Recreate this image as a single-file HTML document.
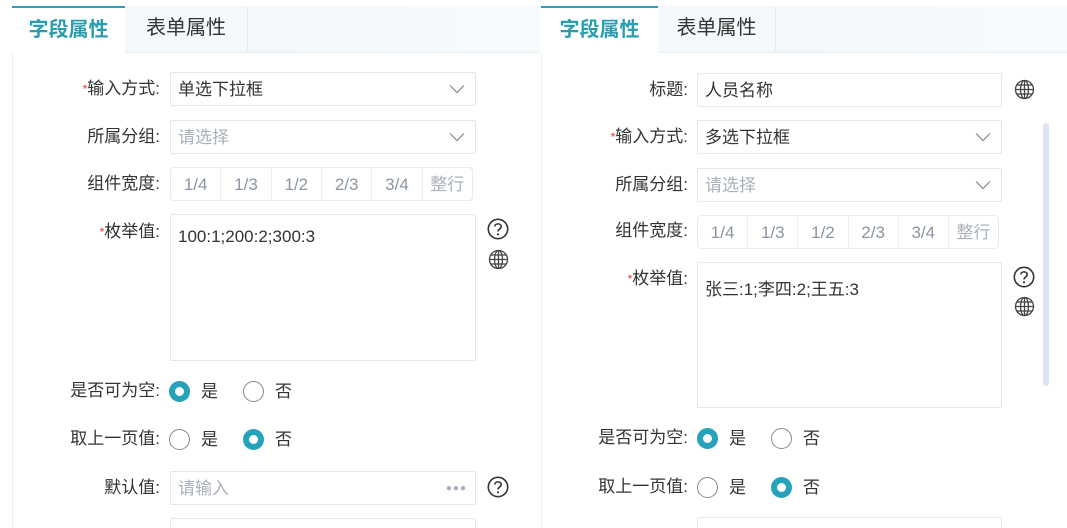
<!DOCTYPE html>
<html style="overflow:hidden;height:528px"><head><meta charset="utf-8"><style>
*{box-sizing:border-box;margin:0;padding:0}
body{width:1067px;height:528px;overflow:hidden;background:#fff;font-family:"Liberation Sans","Noto Sans CJK SC",sans-serif;color:#333;position:relative}
.a{position:absolute}
.tabbar{position:absolute;top:6px;height:47px;background:linear-gradient(90deg,#f1f7fa,#f6fafc);border-bottom:1px solid #e8eef2}
.tab1{position:absolute;top:0;height:47px;background:#fff;border-top:2px solid #2aa0b4;color:#2a9cb0;font-weight:bold;font-size:20px;line-height:45px;text-align:center}
.tab2{position:absolute;top:0;height:46px;background:#f4f9fb;border-right:1px solid #e6eef2;font-size:20px;line-height:44px;text-align:center;color:#333}
.lbl{position:absolute;font-size:17px;text-align:right;width:150px;line-height:22px}
.lbl b{color:#e33;font-weight:normal;font-size:12px;vertical-align:top}
.inp{position:absolute;height:34px;border:1px solid #e4e6e8;border-radius:2px;font-size:17px;line-height:34px;padding-left:7px}
.ph{color:#a8b0bc}
.chev{position:absolute;right:10px;top:11px}
.seg{position:absolute;height:34px;border:1px solid #e8eaec;border-radius:4px;display:flex;font-size:17px;color:#8a96a4;line-height:33px}
.seg span{flex:1;text-align:center;border-right:1px solid #eceef0}
.seg span:last-child{border-right:none;color:#a8b2bc}
.ta{position:absolute;border:1px solid #e4e6e8;border-radius:2px;font-size:17px;padding:12px 7px}
.r{position:absolute;width:21px;height:21px;border-radius:50%;border:1px solid #888}
.r.on{border:6px solid #26a2ba;background:#fff}
.rt{position:absolute;font-size:17px;line-height:22px}
</style></head><body>
<svg width="0" height="0" style="position:absolute"><defs>
<symbol id="cv" viewBox="0 0 16 10"><path d="M1 1.5 L8 8.5 L15 1.5" fill="none" stroke="#888" stroke-width="1.2"/></symbol>
<symbol id="gl" viewBox="0 0 21 21"><g fill="none" stroke="#444" stroke-width="1.3"><circle cx="10.5" cy="10.5" r="9"/><ellipse cx="10.5" cy="10.5" rx="4" ry="9"/><line x1="10.5" y1="1.5" x2="10.5" y2="19.5"/><line x1="1.5" y1="10.5" x2="19.5" y2="10.5"/><line x1="3" y1="6" x2="18" y2="6"/><line x1="3" y1="15" x2="18" y2="15"/></g></symbol>
<symbol id="qm" viewBox="0 0 22 22"><circle cx="11" cy="11" r="9.7" fill="none" stroke="#333" stroke-width="1.6"/><path d="M7.8 8.5 C7.8 5 14.2 5 14.2 8.5 C14.2 11 11 11 11 13.5" fill="none" stroke="#333" stroke-width="1.6"/><circle cx="11" cy="16.3" r="1.1" fill="#333"/></symbol>
</defs></svg>

<!-- LEFT PANEL -->
<div class="tabbar" style="left:12px;width:528px"></div>
<div class="tab1 a" style="left:12px;top:6px;width:113px">字段属性</div>
<div class="tab2" style="left:125px;top:6px;width:123px">表单属性</div>
<div class="a" style="left:12px;top:53px;width:1px;height:475px;background:#eceef0"></div>

<div class="lbl" style="left:10px;top:78px"><b>*</b>输入方式:</div>
<div class="inp" style="left:170px;top:72px;width:306px">单选下拉框<svg class="chev" width="16" height="10"><use href="#cv"/></svg></div>
<div class="lbl" style="left:10px;top:126px">所属分组:</div>
<div class="inp ph" style="left:170px;top:120px;width:306px">请选择<svg class="chev" width="16" height="10"><use href="#cv"/></svg></div>
<div class="lbl" style="left:10px;top:173px">组件宽度:</div>
<div class="seg" style="left:170px;top:167px;width:303px"><span>1/4</span><span>1/3</span><span>1/2</span><span>2/3</span><span>3/4</span><span>整行</span></div>
<div class="lbl" style="left:10px;top:221px"><b>*</b>枚举值:</div>
<div class="ta" style="left:170px;top:214px;width:306px;height:147px">100:1;200:2;300:3</div>
<svg class="a" style="left:487px;top:218px" width="22" height="22"><use href="#qm"/></svg>
<svg class="a" style="left:488px;top:249px" width="21" height="21"><use href="#gl"/></svg>

<div class="lbl" style="left:10px;top:380px">是否可为空:</div>
<div class="r on" style="left:169px;top:381px"></div><div class="rt" style="left:201px;top:381px">是</div>
<div class="r" style="left:243px;top:381px"></div><div class="rt" style="left:275px;top:381px">否</div>
<div class="lbl" style="left:10px;top:428px">取上一页值:</div>
<div class="r" style="left:169px;top:429px"></div><div class="rt" style="left:201px;top:429px">是</div>
<div class="r on" style="left:243px;top:429px"></div><div class="rt" style="left:275px;top:429px">否</div>
<div class="lbl" style="left:10px;top:477px">默认值:</div>
<div class="inp ph" style="left:170px;top:471px;width:306px">请输入<span style="position:absolute;right:8px;top:0;color:#aab;font-size:10px;letter-spacing:1px">●●●</span></div>
<svg class="a" style="left:487px;top:476px" width="22" height="22"><use href="#qm"/></svg>
<div class="inp" style="left:170px;top:518px;width:306px"></div>

<!-- RIGHT PANEL -->
<div class="tabbar" style="left:541px;width:526px"></div>
<div class="tab1 a" style="left:541px;top:6px;width:117px">字段属性</div>
<div class="tab2" style="left:658px;top:6px;width:118px">表单属性</div>
<div class="a" style="left:541px;top:53px;width:1px;height:475px;background:#eceef0"></div>

<div class="lbl" style="left:538px;top:79px">标题:</div>
<div class="inp" style="left:697px;top:73px;width:305px">人员名称</div>
<svg class="a" style="left:1014px;top:79px" width="21" height="21"><use href="#gl"/></svg>
<div class="lbl" style="left:538px;top:126px"><b>*</b>输入方式:</div>
<div class="inp" style="left:697px;top:120px;width:305px">多选下拉框<svg class="chev" width="16" height="10"><use href="#cv"/></svg></div>
<div class="lbl" style="left:538px;top:174px">所属分组:</div>
<div class="inp ph" style="left:697px;top:168px;width:305px">请选择<svg class="chev" width="16" height="10"><use href="#cv"/></svg></div>
<div class="lbl" style="left:538px;top:220px">组件宽度:</div>
<div class="seg" style="left:697px;top:215px;width:302px"><span>1/4</span><span>1/3</span><span>1/2</span><span>2/3</span><span>3/4</span><span>整行</span></div>
<div class="lbl" style="left:538px;top:268px"><b>*</b>枚举值:</div>
<div class="ta" style="left:697px;top:262px;width:305px;height:146px">张三:1;李四:2;王五:3</div>
<svg class="a" style="left:1013px;top:266px" width="22" height="22"><use href="#qm"/></svg>
<svg class="a" style="left:1014px;top:296px" width="21" height="21"><use href="#gl"/></svg>
<div class="a" style="left:1043px;top:123px;width:6px;height:263px;background:#dce3f2;border-radius:3px"></div>

<div class="lbl" style="left:538px;top:427px">是否可为空:</div>
<div class="r on" style="left:697px;top:428px"></div><div class="rt" style="left:729px;top:428px">是</div>
<div class="r" style="left:771px;top:428px"></div><div class="rt" style="left:803px;top:428px">否</div>
<div class="lbl" style="left:538px;top:476px">取上一页值:</div>
<div class="r" style="left:697px;top:477px"></div><div class="rt" style="left:729px;top:477px">是</div>
<div class="r on" style="left:771px;top:477px"></div><div class="rt" style="left:803px;top:477px">否</div>
<div class="inp" style="left:697px;top:517px;width:305px"></div>
</body></html>
